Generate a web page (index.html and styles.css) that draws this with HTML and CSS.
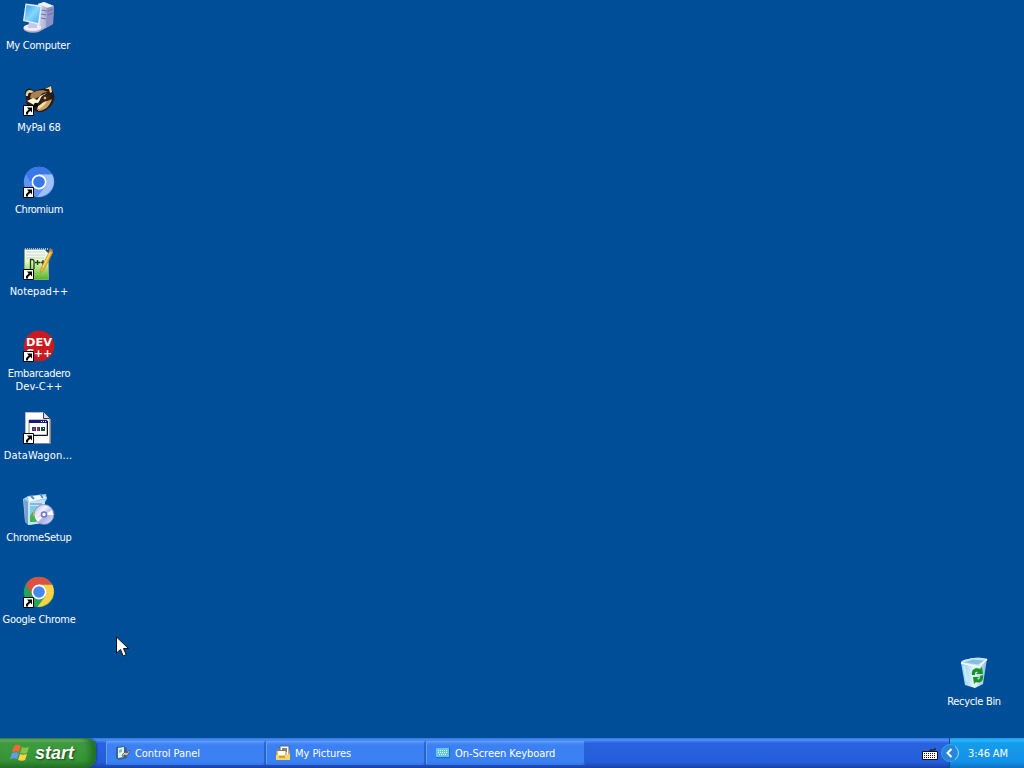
FILE: index.html
```html
<!DOCTYPE html>
<html lang="en">
<head>
<meta charset="utf-8">
<title>Desktop</title>
<link rel="stylesheet" href="styles.css">
</head>
<body>
<svg class="defs" width="0" height="0">
  <defs>
    <linearGradient id="screen" x1="0" y1="0" x2="1" y2="1"><stop offset="0" stop-color="#3b9bf2"/><stop offset=".5" stop-color="#84d8fb"/><stop offset="1" stop-color="#45a5f2"/></linearGradient>
    <linearGradient id="tower"><stop offset="0" stop-color="#dadcf0"/><stop offset="1" stop-color="#8488ba"/></linearGradient>
    <linearGradient id="bin"><stop offset="0" stop-color="#8fc9ef"/><stop offset=".5" stop-color="#e4f7fb"/><stop offset="1" stop-color="#8ab9e0"/></linearGradient>
    <linearGradient id="page" x1="0" y1="0" x2="0" y2="1"><stop offset="0" stop-color="#fff"/><stop offset=".4" stop-color="#e6f7c2"/><stop offset="1" stop-color="#52b51f"/></linearGradient>
    <linearGradient id="disc" x1="0" y1="0" x2="1" y2="1"><stop offset="0" stop-color="#9aa4dc"/><stop offset=".35" stop-color="#f2f0ff"/><stop offset=".6" stop-color="#aeb1e8"/><stop offset="1" stop-color="#e3edff"/></linearGradient>
    <g id="shortcut"><path d="M.5 21.500h10v10H.5z" fill="#fff" stroke="#000"/><path d="M4 23.500h5v5l-1.700-1.700-2.300 2.200v1.500H3v-2.200l2.700-2.900z" fill="#000"/></g>
  </defs>
</svg>
<main class="desktop">
  <section class="shortcuts">
    <div class="item"><svg class="icon" viewBox="0 0 32 32">
      <path d="M15 2l6-2 10 4-1 18-11 6-5-3z" fill="url(#tower)"/><path d="M15 2l6-2 10 4-6 2z" fill="#eef0fb"/><path d="M24 6l7-2-1 18-7 4z" fill="#8c90c3"/><path d="M18 8l6 1M18 12l5 1M18 16l5 1M25 9l5-2M25 13l5-2" stroke="#6972ac"/>
      <ellipse cx="10" cy="26.500" rx="9.500" ry="4.300" fill="#b6a8cf"/><ellipse cx="9.500" cy="25.500" rx="9" ry="3.600" fill="#eeeef9"/><path d="M6 20l8 2v4H5z" fill="#c5c8e8"/>
      <path d="M2.500 1.500l16.500 2L16.500 23 0 19z" fill="#e4edfc"/><path d="M3.500 3l14 2L15 21 1.500 18z" fill="url(#screen)"/></svg><span class="label computer">My Computer</span></div>

    <div class="item"><svg class="icon" viewBox="0 0 32 32">
      <path d="M2 9C2 4 8 3 10 7l8-2 6-1 4-3 2 7c3 5 1 11-3 15-5 5-11 7-16 3-4-4-8-4-8-9 0-2 0-3-1-8z" fill="#2a1b12"/>
      <path d="M3 12c-1-6 4-8 8-4l-3 1c-2-1-3 0-3 3z" fill="#e6d2a2"/><path d="M22 5l6-3 1 6-2 1-1-4z" fill="#ecd6a4"/>
      <path d="M8 10c5-4 12-5 17-2-4 0-6 1-8 4l-5 3-5-1z" fill="#a98250"/><path d="M4 17l6-3 4 2 3-4 7-3-5 4-4 6-4 2z" fill="#fff3d7"/>
      <path d="M17 16c1-5 6-7 11-5l-2 6-7 3z" fill="#3a2417"/><path d="M16 23c3-5 7-5 13-8-2 7-7 12-14 12z" fill="#c9a266"/><path d="M15 22c3-1 4-4 9-5-2 4-5 7-10 9z" fill="#f2ddb0"/>
      <circle cx="22" cy="14" r="1.300" fill="#e6bc6a"/><circle cx="13" cy="21" r="2.200" fill="#090807"/><use href="#shortcut"/></svg><span class="label mypal">MyPal 68</span></div>

    <div class="item"><svg class="icon" viewBox="0 0 32 32">
      <circle cx="16" cy="16" r="15.200" fill="#5e92f3"/><path d="M2.900 8.300A15.200 15.200 0 0 1 29.300 8.600H16l-6.500 11z" fill="#3a78e8"/><path d="M16 8.600h13.300c5 10-2 22-15 22.500L22.500 20z" fill="#9fc0f8"/>
      <circle cx="16" cy="16" r="7.500" fill="#fff"/><circle cx="16" cy="16" r="5.800" fill="#3878e8"/><use href="#shortcut"/></svg><span class="label chromium">Chromium</span></div>

    <div class="item"><svg class="icon" viewBox="0 0 32 32">
      <path d="M1.500 1.500h20l4 4v26h-24z" fill="url(#page)" stroke="#8aa77b"/><path d="M3 4h19M3 7h19M3 10h18" stroke="#c3d4df"/><path d="M2 1h23" stroke="#a8bccb" stroke-width="2" stroke-dasharray="1 1"/>
      <path d="M7.500 21V11.500h1.500q2 0 2 2V21" fill="none" stroke="#174513" stroke-width="1.300"/><path d="M12 14.500h5M14.500 12v5M17.500 14.500h5M20 12v5" stroke="#174513" stroke-width="1.300"/>
      <path d="M27 2l3 2-9 18-4 3 1-5z" fill="#ecb52f" stroke="#b28032" stroke-width=".5"/><path d="M27 0l3 2-1 2-3-2z" fill="#bd7751"/><path d="M27 5l-7 14" stroke="#ffe889"/><use href="#shortcut"/></svg><span class="label notepad">Notepad++</span></div>

    <div class="item"><svg class="icon" viewBox="0 0 32 32"><circle cx="16" cy="16" r="15.200" fill="#cc1920"/>
      <text class="dev-text" x="3" y="16" textLength="26" lengthAdjust="spacingAndGlyphs">DEV</text><text class="dev-text" x="3" y="26.500" textLength="26" lengthAdjust="spacingAndGlyphs">C++</text><use href="#shortcut"/></svg><span class="label">Embarcadero<br><span class="devcpp">Dev-C++</span></span></div>

    <div class="item"><svg class="icon" viewBox="0 0 32 32">
      <path d="M2.500.500h18l6 6v25h-24z" fill="#fff" stroke="#b8b9c2"/><path d="M20.500.500v6h6" fill="#dddfeb" stroke="#35374d"/><path d="M27.500 7v24.500H4" fill="none" stroke="#8a8781"/>
      <path d="M6 8h18v15H6z" fill="#fff" stroke="#898989"/><path d="M6 8h18v3H6z" fill="#17177d"/><path d="M18 9.500h5" stroke="#fff" stroke-dasharray="1 1"/><path d="M24.500 9v14.500H7" fill="none" stroke="#111"/>
      <path d="M9 15h4v4H9z" fill="#243a98"/><path d="M10 16h2v2h-2z" fill="#d12d29"/><path d="M14 15h2v4h-2z" fill="#b12e42"/><path d="M16 15h1v4h-1z" fill="#183874"/><path d="M18 15h4v4h-4z" fill="#164d4d"/><path d="M20 16h1v1h-1z" fill="#fff"/><use href="#shortcut"/></svg><span class="label datawagon">DataWagon...</span></div>

    <div class="item"><svg class="icon" viewBox="0 0 32 32">
      <path d="M0 5l5-3 18-2 1 5-2 3v20l-16 3-4-4z" fill="#9fcdef"/><path d="M1 5l4 3v23l-3-3z" fill="#7a9fcb"/><path d="M5 8l17-2v23L5 31z" fill="#c5e5f7"/><path d="M5 3l14-2 5 3-18 4z" fill="#f6fdff"/><path d="M8 2l3 3M17 0l3 4" stroke="#588cc1" stroke-width="2"/>
      <path d="M7 12h12v14H7z" fill="#75cfeb"/><path d="M7 22l4-6 4 8-2 4H7z" fill="#42b64c"/><path d="M10 16l3 2v4h-3z" fill="#e2bc4f"/><path d="M7 10h12" stroke="#4f87c2"/>
      <circle cx="21" cy="20.500" r="10" fill="url(#disc)" stroke="#7680b5" stroke-width=".7"/><path d="M21 21l8-5a9 9 0 0 1 1 5zM21 21l-8 4 2 3z" fill="#fff"/><circle cx="21" cy="20.500" r="3.300" fill="#6e78c0"/><circle cx="21" cy="20.500" r="1.700" fill="#fff"/></svg><span class="label setup">ChromeSetup</span></div>

    <div class="item"><svg class="icon" viewBox="0 0 32 32">
      <circle cx="16" cy="16" r="15.200" fill="#25a455"/><path d="M2.900 8.300A15.200 15.200 0 0 1 29.300 8.800H16L9.800 20z" fill="#dd5144"/><path d="M16 8.800h13.300c5 10-2 22-15 22.300L22.500 20z" fill="#fcd047"/>
      <circle cx="16" cy="16" r="7.400" fill="#fff"/><circle cx="16" cy="16" r="5.800" fill="#4687ee"/><use href="#shortcut"/></svg><span class="label">Google Chrome</span></div>
  </section>

  <section class="bin-area"><div class="item"><svg class="icon" viewBox="0 0 32 32">
    <path d="M3 5q0-2 3-3l9-2q8-1 14 1l-4 25-8 4-10-3z" fill="url(#bin)"/><path d="M3 5q0-2 3-3l9-2q8-1 14 1l-8 7z" fill="#c4e7f6"/><path d="M6 4.500L15 1.500l11 1-6 4z" fill="#86bddd"/><path d="M3 5l18 4 8-8" fill="none" stroke="#f3fdff" stroke-width="1.500"/><path d="M6 8l3 15" stroke="#c7eefa" stroke-width="2"/>
    <path d="M14 17c-1-5 3-8 8-6l2-2 1 7h-7l2-2c-2-1-3 0-3 3zM25 17c1 6-3 9-7 7l-2 2-1-7h6l-2 2c2 1 3 0 3-3z" fill="#169527"/></svg><span class="label">Recycle Bin</span></div></section>

  <svg class="pointer" viewBox="0 0 13 21"><path d="M.5 1v16l4-3.500 2.700 6.500 3-1.300L7.500 12.500h5z" fill="#fff" stroke="#111"/></svg>
</main>

<footer class="taskbar">
  <button class="start"><svg class="flag" viewBox="0 0 20 18"><path d="M4 2c3-2 5-1 7 0L9 8C7 7 5 7 2 8z" fill="#ee6936"/><path d="M12 3c2 1 4 1 7 0l-2 6c-2 1-4 1-7 0z" fill="#86c447"/><path d="M2 9c3-1 5-1 7 0l-2 6c-2-1-4-1-7 0z" fill="#649be9"/><path d="M10 10c2 1 4 1 7 0l-2 6c-2 1-4 1-7 0z" fill="#ffd449"/></svg><span class="start-text">start</span></button>
  <nav class="tasks">
    <div class="task"><svg class="small" viewBox="0 0 16 16"><path d="M1 2l8-1 3 2v10l-8 2-3-2z" fill="#385fa0"/><path d="M3 3l6-1v10l-6 1z" fill="#e3f5e0"/><path d="M4 5l3-1v3L4 8z" fill="#78c1de"/><path d="M7 10l3-3 2 1 2-3 1 1-3 5-3-1-1 2z" fill="#d9c9a5" stroke="#253653" stroke-width=".6"/></svg><span class="task-text">Control Panel</span></div>
    <div class="task"><svg class="small" viewBox="0 0 16 16"><path d="M1 6l4-2 10 1v10H1z" fill="#e9ae2e"/><path d="M5 1h9v10H5z" fill="#fff" stroke="#576386"/><path d="M7 3h5v4H7z" fill="#778696"/><path d="M2 5.500h9v6H2z" fill="#fff" stroke="#9a7637"/><path d="M1 10h12l2-2v7H1z" fill="#fbd461"/><path d="M4 12h6" stroke="#926f33"/></svg><span class="task-text">My Pictures</span></div>
    <div class="task"><svg class="small" viewBox="0 0 16 16"><path d="M1 3h14v10H1z" fill="#1c6dab"/><path d="M1 3h13v9H1z" fill="#62c8f2"/><path d="M3 5.500h9M3 7.500h9M4 9.500h7" stroke="#e7ffff" stroke-dasharray="1 1"/></svg><span class="task-text">On-Screen Keyboard</span></div>
  </nav>
  <svg class="keyboard" viewBox="0 0 16 13"><path d="M8 5V3h5V1" fill="none" stroke="#111"/><path d="M.5 4.500h15v8H.5z" fill="#fff" stroke="#111"/><path d="M2 6.500h12M2 8.500h12M2 10.500h12" stroke="#111" stroke-dasharray="1 1"/></svg>
  <div class="tray"><svg class="chevron" viewBox="0 0 18 18"><circle cx="9" cy="9" r="8.500" fill="#2785dc" stroke="#3c9ee6"/><path d="M14 2.500a8 8 0 0 1 0 13" fill="none" stroke="#8fdcff"/><path d="M10.500 5L6.500 9l4 4" fill="none" stroke="#fff" stroke-width="2"/></svg><time class="clock">3:46 AM</time></div>
</footer>
</body>
</html>
```
FILE: styles.css
```css
* { box-sizing: border-box; }
body {
  width: 1024px; height: 768px; margin: 0; overflow: hidden;
  display: flex; flex-direction: column;
  font-family: Tahoma, "DejaVu Sans Condensed", "DejaVu Sans", sans-serif;
  font-size: 11px; color: #fff; background: #004e98;
}
.defs { position: absolute; }
.desktop { flex: 1; min-height: 0; position: relative; display: flex; justify-content: space-between; }
.shortcuts { width: 78px; padding-top: 2px; }
.item { width: 78px; height: 82px; display: flex; flex-direction: column; align-items: center; }
.icon { width: 32px; height: 32px; flex: none; overflow: visible; }
.label { margin-top: 5px; text-align: center; line-height: 13px; letter-spacing: -.3px; white-space: nowrap; }
.computer { letter-spacing: -.25px; margin-left: -2px; }
.mypal { letter-spacing: -.1px; }
.chromium { letter-spacing: -.45px; }
.notepad { letter-spacing: 0; }
.devcpp { letter-spacing: .1px; }
.datawagon { letter-spacing: .15px; margin-left: -2px; }
.setup { letter-spacing: -.2px; }
.dev-text { font: bold 10.5px "DejaVu Sans", sans-serif; fill: #fff; }
.bin-area { width: 89px; padding-top: 658px; }
.pointer { position: absolute; left: 116px; top: 636px; width: 13px; height: 21px; }
.taskbar {
  height: 30px; flex: none; display: flex; align-items: stretch;
  background: linear-gradient(#3375e4 0, #4b91f7 2px, #2963df 5px, #245ddb 80%, #1941a5);
}
.start {
  width: 96px; padding: 0 0 0 10px; border: 0; border-radius: 0 9px 10px 0;
  display: flex; align-items: center; gap: 5px; color: #fff;
  background: linear-gradient(#398a39 0, #76b976 2px, #409b40 5px, #359435 75%, #286f28);
  box-shadow: inset -6px 0 6px #226f28, 1px 0 2px #173f9a;
}
.flag { width: 20px; height: 18px; }
.start-text { font: italic bold 18px/22px "Liberation Sans", sans-serif; letter-spacing: 0; text-shadow: 1px 1px 2px #173f16; }
.tasks { display: flex; gap: 1px; padding: 3px 0 3px 10px; }
.task {
  width: 159px; padding-left: 9px; display: flex; align-items: center; gap: 4px;
  border-radius: 2px; background: linear-gradient(#5a99ff, #3c81f3 4px, #3c81f3 85%, #3475e7);
  box-shadow: inset 1px 1px #65a1fc, inset -1px 0 #2a62cc;
}
.small { width: 16px; height: 16px; }
.task-text { padding-top: 1px; line-height: 14px; letter-spacing: -.05px; white-space: nowrap; }
.keyboard { width: 16px; height: 13px; margin: 9px 11px 0 auto; }
.tray {
  width: 75px; display: flex; align-items: center; border-left: 1px solid #0a4b95;
  background: linear-gradient(#238de2 0, #25b9fa 2px, #159dec 5px, #1290e9 80%, #0e70bf);
}
.chevron { width: 18px; height: 18px; margin-left: -9px; }
.clock { margin-left: 9px; letter-spacing: -.1px; white-space: nowrap; }
```
